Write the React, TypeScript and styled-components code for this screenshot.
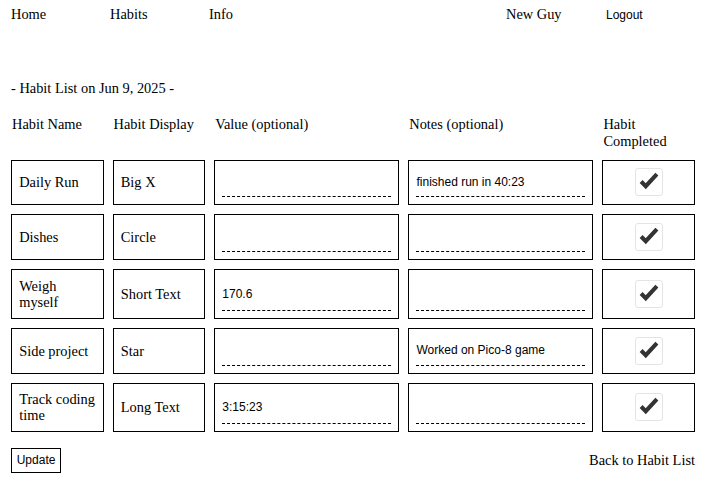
import React from "react";
import styled, { createGlobalStyle } from "styled-components";

const GlobalStyle = createGlobalStyle`
  html, body {
    margin: 0;
    padding: 0;
    background: #ffffff;
  }
  body {
    font-family: "Liberation Serif", "Times New Roman", serif;
    font-size: 14.4px;
    line-height: 16.5px;
    color: #000000;
  }
`;

const Page = styled.div`
  padding: 6px 0 0 11px;
  width: 684px;
`;

const Nav = styled.nav`
  display: grid;
  grid-template-columns: repeat(7, 99px);
  align-items: baseline;
`;

const NavLink = styled.a<{ $col: number }>`
  grid-column: ${(p) => p.$col};
  color: #000000;
  text-decoration: none;
  white-space: nowrap;
`;

const LogoutButton = styled.button`
  grid-column: 7;
  justify-self: start;
  background: none;
  border: none;
  padding: 0 1px;
  font-family: "Liberation Sans", Arial, sans-serif;
  font-size: 12px;
  color: #000000;
  cursor: pointer;
`;

const Title = styled.div`
  margin-top: 57px;
`;

const Table = styled.div`
  margin-top: 19px;
  display: grid;
  grid-template-columns: 1fr 1fr 2fr 2fr 1fr;
  column-gap: 9px;
  row-gap: 9px;
`;

const HeadCell = styled.div`
  padding: 1px 1px 1.5px;
  align-self: start;
`;

const Cell = styled.div<{ $center?: boolean }>`
  box-sizing: border-box;
  min-height: 45px;
  border: 1px solid #000000;
  padding: 7.2px;
  display: flex;
  align-items: center;
  justify-content: ${(p) => (p.$center ? "center" : "flex-start")};
`;

const InputCell = styled(Cell)`
  align-items: stretch;
`;

const TextInput = styled.input`
  flex: 1;
  min-width: 0;
  min-height: 28.6px;
  border: none;
  border-bottom: 1px dashed #000000;
  padding: 0;
  margin: 0;
  background: transparent;
  font-family: "Liberation Sans", Arial, sans-serif;
  font-size: 12px;
  color: #000000;
  outline: none;
`;

const CheckBox = styled.div`
  box-sizing: border-box;
  width: 28px;
  height: 28px;
  border: 1px solid #e4e4e4;
  border-radius: 3px;
  background: #ffffff;
  display: flex;
  align-items: center;
  justify-content: center;
`;

const Footer = styled.div`
  margin-top: 16px;
  display: flex;
  justify-content: space-between;
  align-items: center;
`;

const UpdateButton = styled.button`
  background: #ffffff;
  border: 1px solid #000000;
  border-radius: 0;
  padding: 4.6px 4.7px;
  margin: 0;
  font-family: "Liberation Sans", Arial, sans-serif;
  font-size: 12px;
  line-height: 13.8px;
  color: #000000;
  cursor: pointer;
`;

const BackLink = styled.a`
  color: #000000;
  text-decoration: none;
`;

const Check = () => (
  <svg width="28" height="28" viewBox="0 0 28 28">
    <polyline
      points="5.5,13.5 10.5,18.5 22.5,5.5"
      fill="none"
      stroke="#333333"
      strokeWidth="4.4"
      strokeLinecap="butt"
      strokeLinejoin="miter"
    />
  </svg>
);

type Habit = {
  name: string;
  display: string;
  value: string;
  notes: string;
};

const habits: Habit[] = [
  { name: "Daily Run", display: "Big X", value: "", notes: "finished run in 40:23" },
  { name: "Dishes", display: "Circle", value: "", notes: "" },
  { name: "Weigh myself", display: "Short Text", value: "170.6", notes: "" },
  { name: "Side project", display: "Star", value: "", notes: "Worked on Pico-8 game" },
  { name: "Track coding time", display: "Long Text", value: "3:15:23", notes: "" },
];

export default function App() {
  return (
    <>
      <GlobalStyle />
      <Page>
        <Nav>
          <NavLink $col={1} href="#">Home</NavLink>
          <NavLink $col={2} href="#">Habits</NavLink>
          <NavLink $col={3} href="#">Info</NavLink>
          <NavLink $col={6} href="#">New Guy</NavLink>
          <LogoutButton>Logout</LogoutButton>
        </Nav>
        <Title>- Habit List on Jun 9, 2025 -</Title>
        <Table>
          <HeadCell>Habit Name</HeadCell>
          <HeadCell>Habit Display</HeadCell>
          <HeadCell>Value (optional)</HeadCell>
          <HeadCell>Notes (optional)</HeadCell>
          <HeadCell>Habit Completed</HeadCell>
          {habits.map((h) => (
            <React.Fragment key={h.name}>
              <Cell>{h.name}</Cell>
              <Cell>{h.display}</Cell>
              <InputCell>
                <TextInput defaultValue={h.value} />
              </InputCell>
              <InputCell>
                <TextInput defaultValue={h.notes} />
              </InputCell>
              <Cell $center>
                <CheckBox>
                  <Check />
                </CheckBox>
              </Cell>
            </React.Fragment>
          ))}
        </Table>
        <Footer>
          <UpdateButton>Update</UpdateButton>
          <BackLink href="#">Back to Habit List</BackLink>
        </Footer>
      </Page>
    </>
  );
}
